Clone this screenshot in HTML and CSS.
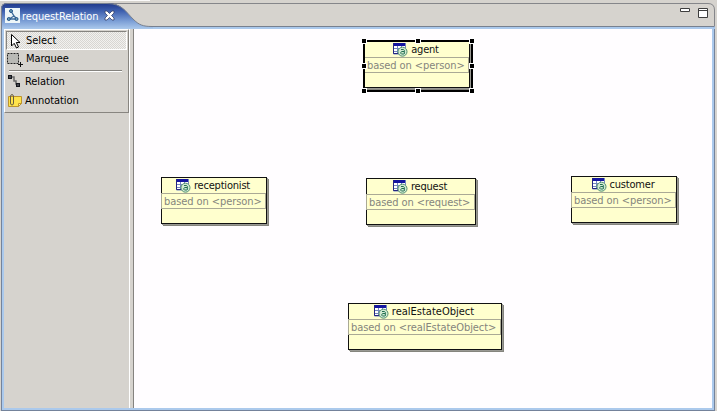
FILE: index.html
```html
<!DOCTYPE html>
<html lang="en">
<head>
<meta charset="utf-8">
<title>requestRelation</title>
<link rel="stylesheet" href="styles.css">
</head>
<body>
<svg class="defs" width="0" height="0">
  <symbol id="entity" viewBox="0 0 15 15">
    <path d="M1 1h12v10H1z" fill="#fff"/>
    <path d="M1 1h12v3H1z" fill="#1515a0"/>
    <path d="M.5 1v11h6M12.5 1v5M4.5 4v7M8.5 4v3M1 6.5h11M1 9.5h6" fill="none" stroke="#7186bd"/>
    <path d="M.5 1v10.5h5" fill="none" stroke="#252582"/>
    <circle cx="9.5" cy="9.7" r="4.5" fill="#d3ead2" stroke="#529070"/>
    <path d="M8 7.5h2.5l.8.8v3.6M11 9.5H8.8l-1 .8v1l.7.7h2l.8-.6" fill="none" stroke="#216f50"/>
  </symbol>
</svg>
<div class="backdrop"></div>
<main class="window">
  <header class="titlebar">
    <svg class="tabshape" width="714" height="26" viewBox="0 0 714 26">
      <defs><linearGradient id="blue" x1="0" y1="0" x2="0" y2="1">
        <stop offset="0" stop-color="#1d3588"/><stop offset=".3" stop-color="#3d5fae"/><stop offset=".7" stop-color="#7c9fd6"/><stop offset="1" stop-color="#abc9ec"/>
      </linearGradient></defs>
      <path d="M0 26V6Q0 0 6 0H708Q714 0 714 6V26Z" fill="#d6d3ce"/>
      <path d="M110 .5H707Q713.5 .5 713.5 7V26" fill="none" stroke="#85868a"/>
      <path d="M0 26V6Q0 0 6 0H106C121 0 125 9 132 16C138 22 142 23.5 151 23.5H714V26Z" fill="url(#blue)"/>
      <path d="M.5 26V6Q.5 .5 6 .5H106C121 .5 125 9 132 16C138 22 142 23.5 151 23.5H713" fill="none" stroke="#77808f"/>
      <path d="M152 24H712V26H152Z" fill="#abc9ec"/>
    </svg>
    <div class="tab">
      <svg width="15" height="15" viewBox="0 0 15 15"><path d="M0 0h15v15H0z" fill="#edf6f8"/><path d="M6 3l3 5 3 3M9 8l-5 3h7" fill="none" stroke="#3c6b99" stroke-width="1.3"/><circle cx="6" cy="3" r="1.5" fill="#6aa0b4" stroke="#24538b"/><circle cx="3.8" cy="11" r="1.5" fill="#6aa0b4" stroke="#24538b"/><circle cx="11.5" cy="11" r="1.5" fill="#6aa0b4" stroke="#24538b"/></svg>
      <span class="tabname">requestRelation</span>
      <svg class="close" width="11" height="11" viewBox="0 0 11 11"><path d="M1 1h2l2.5 2.5L8 1h2v2L7.5 5.5 10 8v2H8L5.500 7.500 3 10H1V8l2.500-2.500L1 3z" fill="#fff" stroke="#35436b" stroke-width=".8"/></svg>
    </div>
    <svg class="controls" width="30" height="11" viewBox="0 0 30 11"><path d="M.500 1.500h9v3h-9zM18.500 1.500h9v9h-9zM18 3.500h10" fill="#fff" stroke="#3e3e3e"/></svg>
  </header>
  <div class="content">
    <aside class="palette">
      <div class="tools">
        <div class="tool select"><svg width="16" height="16" viewBox="0 0 16 16"><path d="M3.500 1.500v11.500l2.700-2.700 2.300 4.700 2-1-2.200-4.500h3.700z" fill="#fff" stroke="#000"/></svg><span>Select</span></div>
        <div class="tool marquee"><svg width="16" height="16" viewBox="0 0 16 16"><path d="M.500 2.500h11v10H.500z" fill="#b9b9b5" stroke="#222" stroke-dasharray="2 1"/><path d="M11 13.500h5M13.500 11v5" stroke="#111"/></svg><span>Marquee</span></div>
        <div class="rule"></div>
        <div class="tool relation"><svg width="16" height="16" viewBox="0 0 16 16"><path d="M4 4h2v4h2v3h2" fill="none" stroke="#686868" stroke-width="1.500"/><path d="M0 2h4v4H0zM8 10h4v4H8z" fill="#15171d"/><path d="M1.500 3.500h1v1h-1zM9.500 11.500h1v1h-1z" fill="#d4d8e3"/></svg><span>Relation</span></div>
        <div class="tool annotation"><svg width="16" height="16" viewBox="0 0 16 16"><path d="M.500 3.500h13v7l-3 3H.500z" fill="#ffe34b" stroke="#bd942c"/><path d="M10.500 13.500v-3h3z" fill="#fff3a4" stroke="#bd942c"/><path d="M2.500 9V4q0-2.500 1.500-2.500t1.500 2.500v6q0 2-1.500 2t-1.500-2V5" fill="none" stroke="#665c3c"/></svg><span>Annotation</span></div>
      </div>
    </aside>
    <section class="canvas">
      <article class="node agent">
        <h2><svg width="15" height="15"><use href="#entity"/></svg><span>agent</span></h2><p><span>based on &lt;person&gt;</span></p>
        <svg class="handles" width="112" height="54" viewBox="0 0 112 54"><path d="M2 2h108v50H2z" fill="none" stroke="#000" stroke-width="2"/><path d="M0 0h4v4H0zM54 0h4v4h-4zM108 0h4v4h-4zM0 25h4v4H0zM108 25h4v4h-4zM0 50h4v4H0zM54 50h4v4h-4zM108 50h4v4h-4z" stroke="#fff" stroke-width="2" paint-order="stroke" fill="#000"/></svg>
      </article>
      <article class="node receptionist"><h2><svg width="15" height="15"><use href="#entity"/></svg><span>receptionist</span></h2><p><span>based on &lt;person&gt;</span></p></article>
      <article class="node request"><h2><svg width="15" height="15"><use href="#entity"/></svg><span>request</span></h2><p><span>based on &lt;request&gt;</span></p></article>
      <article class="node customer"><h2><svg width="15" height="15"><use href="#entity"/></svg><span>customer</span></h2><p><span>based on &lt;person&gt;</span></p></article>
      <article class="node estate"><h2><svg width="15" height="15"><use href="#entity"/></svg><span>realEstateObject</span></h2><p><span>based on &lt;realEstateObject&gt;</span></p></article>
    </section>
  </div>
</main>
</body>
</html>
```
FILE: styles.css
```css
* { box-sizing: border-box; }
body { margin: 0; width: 717px; height: 411px; overflow: hidden; background: #d6d3ce; font: 11px/14px "DejaVu Sans Condensed", "DejaVu Sans", sans-serif; font-stretch: condensed; }
.defs { position: absolute; }
svg { display: block; flex-shrink: 0; overflow: visible; }
span { white-space: nowrap; }
.backdrop { width: 150px; height: 3px; background: linear-gradient(#fbfafa 1px, #d6d3ce 1px); }
.window { margin-left: 1px; width: 714px; height: 408px; display: flex; flex-direction: column; }
.titlebar { position: relative; height: 26px; display: flex; justify-content: space-between; }
.tabshape { position: absolute; inset: 0; }
.tab { position: relative; display: flex; padding: 5px 0 0 4px; color: #fff; }
.tabname { width: 77px; margin-left: 2px; margin-top: 2px; letter-spacing: -.1px; }
.close { margin: 2px 0 0 5px; }
.controls { position: relative; margin: 4px 5px 0 0; }
.content { height: 382px; display: flex; border: 1px solid #74839b; border-top: 0; box-shadow: inset 2px 0 #abc9ec, inset -2px 0 #abc9ec, inset 0 -2px #abc9ec; padding: 0 2px 2px; }
.palette { width: 130px; flex-shrink: 0; background: linear-gradient(90deg, transparent 125px, #fff 125px, #fff 126px, #d6d3ce 126px, #d6d3ce 129px, #85837f 129px), #d6d3ce; }
.tools { width: 125px; height: 84px; border: 1px solid #fff; border-right-color: #888580; border-bottom-color: #888580; padding: 1px; }
.tool { display: flex; height: 19px; padding: 0 0 0 2px; align-items: center; }
.tool span { margin-left: 2px; margin-top: 1px; letter-spacing: -.05px; }
.select { width: 121px; border: 1px solid; border-color: #85837f #fff #fff #85837f; padding: 0 0 0 1px; background: repeating-conic-gradient(#d8d6d2 0 25%, #f2f1ef 0 50%) 0 0 / 2px 2px; }
.marquee { height: 18px; }
.marquee svg { margin-left: -1px; margin-right: 1px; }
.tool.marquee span { margin-top: -1px; }
.rule { height: 2px; margin: 2px 5px 0 3px; background: #85837f; border-bottom: 1px solid #fff; }
.relation { padding-bottom: 1px; }
.tool.relation span, .tool.annotation span { margin-left: 1px; }
.canvas { position: relative; flex: 1; background: #fffdff; }
.node { position: absolute; height: 47px; width: 106px; background: #ffffce; border: 1px solid #111; box-shadow: 1px 1px #999993, 2px 2px #85857e; }
.node h2 { margin: 0; height: 15px; display: flex; justify-content: center; gap: 3px; font: inherit; color: #111; letter-spacing: -.2px; padding-right: 2px; line-height: 16px; }
.node p { margin: 0 0 0 -1px; height: 16px; border: 1px solid #aaa995; padding-left: 2px; color: #85857d; line-height: 15px; letter-spacing: -.08px; }
.agent { left: 230px; top: 12px; }
.receptionist { left: 27px; top: 148px; }
.request { left: 232px; top: 149px; width: 110px; }
.customer { left: 437px; top: 147px; }
.estate { left: 214px; top: 274px; width: 154px; }
.estate h2 { letter-spacing: 0; }
.handles { position: absolute; left: -3px; top: -3px; }
```
